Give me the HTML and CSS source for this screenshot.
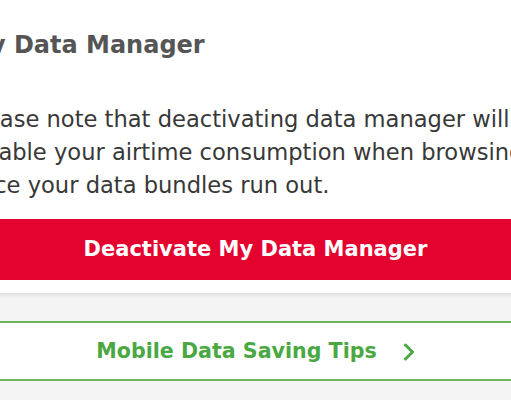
FILE: index.html
```html
<!DOCTYPE html>
<html lang="en">
<head>
<meta charset="utf-8">
<title>My Data Manager</title>
<link rel="stylesheet" href="styles.css">
</head>
<body>
<div class="page">
  <section class="card">
    <h1 class="title">My Data Manager</h1>
    <p class="note">Please note that deactivating data manager will disable your airtime consumption when browsing once your data bundles run out.</p>
    <button class="btn-deactivate" type="button">Deactivate My Data Manager</button>
  </section>
  <a class="tips" href="#">
    <span class="tips-label">Mobile Data Saving Tips</span>
    <svg class="chev" width="12" height="18" viewBox="0 0 12 18" aria-hidden="true"><path d="M2.5 2 L9.5 9 L2.5 16" fill="none" stroke="#4aa843" stroke-width="3" stroke-linecap="round" stroke-linejoin="round"/></svg>
  </a>
</div>
</body>
</html>
```
FILE: styles.css
```css
html, body {
  margin: 0;
  padding: 0;
}
body {
  background: #f4f4f4;
  overflow: hidden;
  font-family: "DejaVu Sans", sans-serif;
}
.page {
  margin: 0 -34px;
}
.card {
  background: #fff;
  padding: 29px 0 13px;
  box-shadow: 0 2px 5px rgba(0, 0, 0, 0.10);
}
.title {
  margin: 0;
  font-size: 24px;
  line-height: 32px;
  font-weight: 700;
  color: #555;
}
.note {
  margin: 42px 0 0;
  font-size: 22.6px;
  line-height: 33px;
  color: #383838;
}
.btn-deactivate {
  display: flex;
  align-items: center;
  justify-content: center;
  width: 100%;
  height: 61px;
  margin-top: 17px;
  border: 0;
  padding: 0;
  background: #e4032e;
  color: #fff;
  font-family: "DejaVu Sans", sans-serif;
  font-size: 21px;
  line-height: 1;
  font-weight: 700;
}
.tips {
  display: flex;
  align-items: center;
  justify-content: center;
  gap: 26px;
  height: 56px;
  margin-top: 28px;
  background: #fff;
  border-top: 2px solid #6ab45c;
  border-bottom: 2px solid #6ab45c;
  text-decoration: none;
  color: #4aa843;
  font-size: 20.6px;
  line-height: 1;
  font-weight: 700;
}
.chev {
  display: block;
  margin-top: 1px;
}
```
